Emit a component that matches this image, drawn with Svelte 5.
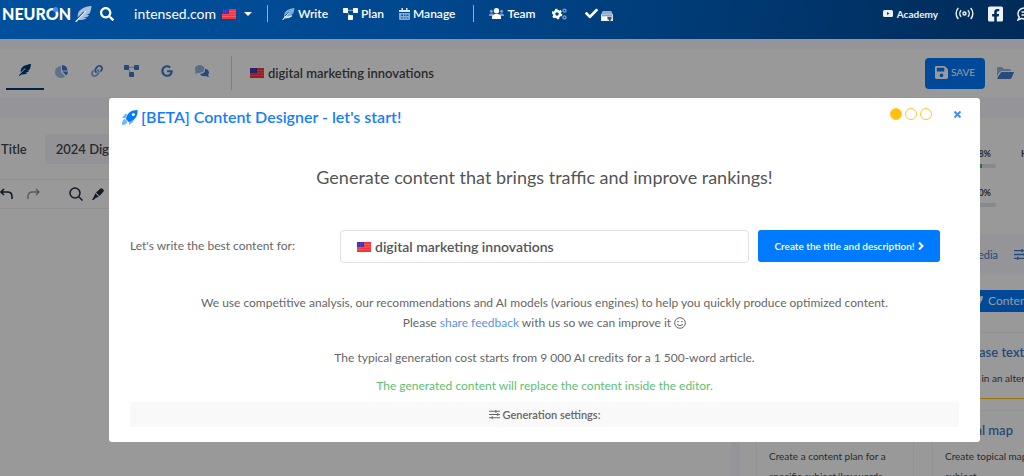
<script>
  const feather = 'M512 0C460.22 3.56 96.44 38.2 71.01 287.61c-3.09 26.66-4.84 53.44-5.99 80.24l178.87-178.69c6.25-6.25 16.4-6.25 22.65 0s6.25 16.38 0 22.63L7.04 471.03c-9.38 9.37-9.38 24.57 0 33.94 9.38 9.37 24.59 9.37 33.98 0l57.13-57.07c42.09-.14 84.15-2.53 125.96-7.36 53.48-5.44 97.02-26.47 132.58-56.54H255.74l146.79-48.88c11.25-14.89 21.37-30.71 30.45-47.12h-81.14l106.54-53.21C500.29 132.86 510.19 26.26 512 0z';
  const search = 'M505 442.7L405.3 343c-4.5-4.5-10.6-7-17-7H372c27.6-35.3 44-79.7 44-128C416 93.1 322.9 0 208 0S0 93.1 0 208s93.1 208 208 208c48.3 0 92.7-16.4 128-44v16.3c0 6.4 2.5 12.5 7 17l99.7 99.7c9.4 9.4 24.6 9.4 33.9 0l28.3-28.3c9.4-9.4 9.4-24.6.1-34zM208 336c-70.7 0-128-57.2-128-128 0-70.7 57.2-128 128-128 70.7 0 128 57.2 128 128 0 70.7-57.2 128-128 128z';
  const check = 'M173.898 439.404l-166.4-166.4c-9.997-9.997-9.997-26.206 0-36.204l36.203-36.204c9.997-9.998 26.207-9.998 36.204 0L192 312.69 432.095 72.596c9.997-9.997 26.207-9.997 36.204 0l36.203 36.204c9.997 9.997 9.997 26.206 0 36.204l-294.4 294.401c-9.998 9.997-26.207 9.997-36.204-.001z';
  const linkA = 'M326.612 185.391c59.747 59.809 58.927 155.698.36 214.59-.11.12-.24.25-.36.37l-67.2 67.2c-59.27 59.27-155.699 59.262-214.96 0-59.27-59.26-59.27-155.7 0-214.96l37.106-37.106c9.84-9.84 26.786-3.3 27.294 10.606.648 17.722 3.826 35.527 9.69 52.721 1.986 5.822.567 12.262-3.783 16.612l-13.087 13.087c-28.026 28.026-28.905 73.66-1.155 101.96 28.024 28.579 74.086 28.749 102.325.51l67.2-67.19c28.191-28.191 28.073-73.757 0-101.83-3.701-3.694-7.429-6.564-10.341-8.569a16.037 16.037 0 0 1-6.947-12.606c-.396-10.567 3.348-21.456 11.698-29.806l21.054-21.055c5.521-5.521 14.182-6.199 20.584-1.731a152.482 152.482 0 0 1 20.522 17.197z';
  const linkB = 'M467.547 44.449c-59.261-59.262-155.69-59.27-214.96 0l-67.2 67.2c-.12.12-.25.25-.36.37-58.566 58.892-59.387 154.781.36 214.59a152.454 152.454 0 0 0 20.521 17.196c6.402 4.468 15.064 3.789 20.584-1.731l21.054-21.055c8.35-8.35 12.094-19.239 11.698-29.806a16.037 16.037 0 0 0-6.947-12.606c-2.912-2.005-6.64-4.875-10.341-8.569-28.073-28.073-28.191-73.639 0-101.83l67.2-67.19c28.239-28.239 74.3-28.069 102.325.51 27.75 28.3 26.872 73.934-1.155 101.96l-13.087 13.087c-4.35 4.35-5.769 10.79-3.783 16.612 5.864 17.194 9.042 34.999 9.69 52.721.509 13.906 17.454 20.446 27.294 10.606l37.106-37.106c59.271-59.259 59.271-155.699.001-214.959z';
  const google = 'M488 261.8C488 403.3 391.1 504 248 504 110.8 504 0 393.2 0 256S110.8 8 248 8c66.8 0 123 24.5 166.3 64.9l-67.5 64.9C258.5 52.6 94.3 116.6 94.3 256c0 86.5 69.1 156.6 153.7 156.6 98.2 0 135-70.4 140.8-106.9H248v-85.3h236.1c2.3 12.7 3.9 24.9 3.9 41.4z';
  const save = 'M433.941 129.941l-83.882-83.882A48 48 0 0 0 316.118 32H48C21.49 32 0 53.49 0 80v352c0 26.51 21.49 48 48 48h352c26.51 0 48-21.49 48-48V163.882a48 48 0 0 0-14.059-33.941zM224 416c-35.346 0-64-28.654-64-64 0-35.346 28.654-64 64-64s64 28.654 64 64c0 35.346-28.654 64-64 64zm96-304.52V212c0 6.627-5.373 12-12 12H76c-6.627 0-12-5.373-12-12V108c0-6.627 5.373-12 12-12h228.52c3.183 0 6.235 1.264 8.485 3.515l3.48 3.48A11.996 11.996 0 0 1 320 111.48z';
  const facebook = 'M400 32H48A48 48 0 0 0 0 80v352a48 48 0 0 0 48 48h137.25V327.69h-63V256h63v-54.64c0-62.15 37-96.48 93.67-96.48 27.14 0 55.52 4.84 55.52 4.84v61h-31.27c-30.81 0-40.42 19.12-40.42 38.73V256h68.78l-11 71.69h-57.78V480H400a48 48 0 0 0 48-48V80a48 48 0 0 0-48-48z';
  let keyword = 'digital marketing innovations';
  let title = '2024 Digital Marketing Innovations';
</script>

{#snippet flag()}
  <svg class="flag" width="14" height="10" viewBox="0 0 14 10" aria-hidden="true">
    <rect width="14" height="10" fill="#ff3038" />
    <path d="M0 2.5h14M0 5h14M0 7.5h14" stroke="#ff686c" stroke-width=".8" />
    <rect width="7" height="5" fill="#3a2bb0" />
    <path d="M1 1.2h5M1.5 2.6h4M1 4h5" stroke="#8c86e0" stroke-width=".5" stroke-dasharray="1 1" />
  </svg>
{/snippet}

{#snippet diagram()}
  <svg width="15" height="12" viewBox="0 0 15 12" fill="currentColor" aria-hidden="true">
    <path d="M4 2.4h7M4 4l3 4" stroke="currentColor" opacity=".55" />
    <rect width="5" height="5" rx=".7" /><rect x="10" width="5" height="5" rx=".7" /><rect x="5" y="7" width="5" height="5" rx=".7" />
  </svg>
{/snippet}

{#snippet sliders(w)}
  <svg width={w} height={w} viewBox="0 0 12 12" fill="none" stroke="currentColor" stroke-width="1.2" aria-hidden="true">
    <path d="M0 2.5h12M0 6h12M0 9.5h12M7.5 1v3M9.5 4.5v3M3.5 8v3" />
  </svg>
{/snippet}

<header class="top">
  <a class="logo" href="#home"><span>NEUR<span class="ring">O</span>N</span>
    <svg width="17" height="16" viewBox="0 0 512 512" aria-hidden="true"><path d={feather} fill="#a8c0df" /><path d="M8 504L330 170" stroke="#fff" stroke-width="30" /></svg>
  </a>
  <button class="plain find" aria-label="Search"><svg width="14" height="14" viewBox="0 0 512 512" fill="currentColor"><path d={search} /></svg></button>
  <button class="plain site">intensed.com {@render flag()}<svg class="caret" width="8" height="4" viewBox="0 0 8 4"><path d="M0 0h8L4 4z" fill="#fff" /></svg></button>
  <nav>
    <a class="write" href="#write"><svg width="13" height="12" viewBox="0 0 512 512" aria-hidden="true"><path d={feather} fill="#82aad5" /><path d="M8 504L270 210M65 380Q300 420 400 340L255 384L100 390z" stroke="#fff" fill="#fff" stroke-width="30" /></svg>Write</a>
    <a class="plan" href="#plan">{@render diagram()}Plan</a>
    <a class="manage" href="#manage"><svg width="11" height="12" viewBox="0 0 11 12" aria-hidden="true"><path d="M0 2h11v2H0zM2.5 0h1.5v3H2.5zM7 0h1.5v3H7z" fill="#dce8f5" /><path d="M0 5h11v6a1 1 0 0 1-1 1H1a1 1 0 0 1-1-1z" fill="#86abd3" /><path d="M2 6.5h2v1.5H2zM5 6.5h1.5v1.5H5zM7.5 6.5h2v1.5h-2zM2 9.5h2v1H2zM5 9.5h1.5v1H5zM7.5 9.5h2v1h-2z" fill="#1f5da0" /></svg>Manage</a>
    <a class="team" href="#team"><svg width="15" height="11" viewBox="0 0 15 11" fill="currentColor" aria-hidden="true"><g opacity=".5"><circle cx="2.4" cy="3.2" r="1.5" /><circle cx="12.6" cy="3.2" r="1.5" /><path d="M0 7.5a2 2 0 0 1 2-2h2v2.5H0zM15 7.5a2 2 0 0 0-2-2h-2v2.5h4z" /></g><circle cx="7.5" cy="2.7" r="2.7" /><path d="M3 9.5a3.5 3.5 0 0 1 3.5-3.5h2a3.5 3.5 0 0 1 3.5 3.5V11H3z" /></svg>Team</a>
    <a class="cogs" href="#settings" aria-label="Settings"><svg width="15" height="12" viewBox="0 0 15 12" aria-hidden="true"><circle cx="5" cy="6" r="3" fill="none" stroke="#fff" stroke-width="2.5" /><circle cx="5" cy="6" r="4.5" fill="none" stroke="#fff" stroke-width="1.6" stroke-dasharray="2.3 2.41" /><g fill="none" stroke="#739dca"><circle cx="12.5" cy="2.6" r="1.5" stroke-width="1.4" /><circle cx="12.5" cy="9.4" r="1.5" stroke-width="1.4" /></g></svg></a>
    <a class="done" href="#tasks" aria-label="Tasks"><svg width="13" height="13" viewBox="0 0 512 512" fill="currentColor" aria-hidden="true"><path d={check} /></svg><svg class="shop" width="12" height="12" viewBox="0 0 12 12" aria-hidden="true"><path d="M2 1h8l2 4v6H0V5z" fill="#dce3e9" /><path d="M2 1h8l1.5 3H.5z" fill="#a3abb2" /><path d="M1 4.500h10v2H1z" fill="#65a7f4" /><path d="M1 6.500h5v4H1z" fill="#fff" /><path d="M6.500 7h4v2l-1 1v2H8v-2L6.500 9z" fill="#50504b" /></svg></a>
  </nav>
  <div class="right">
    <a class="academy" href="#academy"><svg width="10" height="7" viewBox="0 0 10 7"><rect width="10" height="7" rx="1.5" fill="#ebf0f7" /><path d="M4 2v3l2.5-1.5z" fill="#003a75" /></svg>Academy</a>
    <a href="#live" aria-label="Live"><svg width="19" height="13" viewBox="0 0 20 13" fill="none" stroke="currentColor" stroke-width="1.5"><circle cx="10" cy="6.5" r="1.6" /><path d="M6.500 3a5 5 0 0 0 0 7M13.500 3a5 5 0 0 1 0 7M3.500.7a8.500 8.500 0 0 0 0 11.600M16.500.7a8.500 8.500 0 0 1 0 11.600" /></svg></a>
    <a href="#facebook" aria-label="Facebook"><svg width="15" height="16" viewBox="0 26 448 460" fill="currentColor"><path d={facebook} /></svg></a>
    <a href="#chat" aria-label="Chat"><svg width="15" height="14" viewBox="0 0 15 14" fill="none" stroke="currentColor" stroke-width="1.5"><path d="M1 13l1.200-3A5.300 5.300 0 0 1 1 6.500C1 3.500 4 1 7.500 1S14 3.500 14 6.500 11 12 7.500 12c-1 0-2-.2-3-.6zM4.500 5h6M4.500 8h4" /></svg></a>
  </div>
</header>

<main class="page">
  <div class="tools">
    <div class="tabs">
      <button class="plain active" aria-label="Editor"><svg width="12" height="12" viewBox="0 0 512 512" fill="#003b7f"><path d={feather} /></svg></button>
      <button class="plain" aria-label="Statistics"><svg width="13" height="13" viewBox="0 0 13 13"><path d="M6 1v6l4 4.500A6 6 0 1 1 6 1z" fill="#9fbfe8" /><path d="M7 0a6 6 0 0 1 5.500 5.500H7zM7.500 6.500H13a6 6 0 0 1-1.800 4z" fill="#3d7bd5" /></svg></button>
      <button class="plain" aria-label="Links"><svg width="12" height="12" viewBox="0 0 512 512"><path d={linkA} fill="#86aee5" /><path d={linkB} fill="#477fd0" /></svg></button>
      <button class="plain" aria-label="Structure">{@render diagram()}</button>
      <button class="plain" aria-label="Search results"><svg width="12" height="12" viewBox="0 0 488 512" fill="currentColor"><path d={google} /></svg></button>
      <button class="plain" aria-label="Comments"><svg width="14" height="12" viewBox="0 0 14 12"><path d="M10 3.800c2.500.4 4 1.900 4 3.700 0 .9-.4 1.700-1 2.300L14 12c-1.300 0-2.300-.4-3-.9-2.500.5-5-.2-6-2.100C8.500 9 10.500 7 10 3.800z" fill="#3f7bd0" /><ellipse cx="4.7" cy="4" rx="4.7" ry="3.9" fill="#92b5e5" /><path d="M1 5l-1 4 4-1.500z" fill="#92b5e5" /></svg></button>
    </div>
    <div class="query">{@render flag()}<span>digital marketing innovations</span></div>
    <button class="save"><svg width="13" height="15" viewBox="0 24 448 464" fill="currentColor" aria-hidden="true"><path d={save} /></svg>SAVE</button>
    <button class="plain folder" aria-label="Open"><svg width="17" height="12" viewBox="0 0 17 12"><path d="M0 9.500V1.500A1.500 1.500 0 0 1 1.500 0H5l2 2h5.500A1.500 1.500 0 0 1 14 3.500V4H5a3 3 0 0 0-2.600 1.500z" fill="#96b5dc" /><path d="M5 5h11.500q.7.100.4.8L14.500 11q-.5 1-1.500 1H.8q-.8-.1-.4-.9L3.500 6Q4 5 5 5z" fill="#447dd0" /></svg></button>
  </div>

  <div class="columns">
    <section class="editor">
      <div class="title-row"><label for="title">Title</label><input id="title" bind:value={title} /></div>
      <div class="format">
        <button class="plain" aria-label="Undo"><svg width="13" height="13" viewBox="0 0 13 13" fill="none" stroke="currentColor" stroke-width="1.6"><path d="M4 1L1 4l3 3M1 4h6.500q4.500 0 4.500 4.500V11" /></svg></button>
        <button class="plain redo" aria-label="Redo"><svg width="13" height="13" viewBox="0 0 13 13" fill="none" stroke="currentColor" stroke-width="1.4"><path d="M9 1l3 3-3 3M12 4H5.500Q1 4 1 8.500V11" /></svg></button>
        <button class="plain lens" aria-label="Find"><svg width="14" height="14" viewBox="0 0 14 14" fill="none" stroke="currentColor" stroke-width="1.5"><circle cx="6" cy="6" r="5" /><path d="M9.800 9.800L13.500 13.500" /></svg></button>
        <button class="plain" aria-label="Highlight"><svg width="12" height="12" viewBox="0 0 12 12" fill="currentColor"><path d="M4 4.500L8.500.5q1-.8 2 .2l.8.8q1 1 .2 2L7.500 8zM3.300 5.200l3.500 3.500L5 9.500 4 9.800 1.500 12H0l2.200-4z" /></svg></button>
      </div>
    </section>
    <aside>
      <div class="scores">
        <div class="score"><span>58%</span><i><b></b></i></div><div class="score next"><span>H1</span></div>
        <div class="score"><span>0%</span><i></i></div>
      </div>
      <div class="asidetabs"><button class="plain">Media</button><button class="plain" aria-label="Options">{@render sliders(13)}</button></div>
      <div class="panel">
        <button class="content"><svg width="11" height="11" viewBox="0 0 512 512" fill="currentColor" aria-hidden="true"><path d={feather} /></svg>Content</button>
        <div class="cards">
          <article><h3>Write</h3><p>Write the next part</p></article>
          <article><h3>Rephrase text</h3><p>Rewrite in an alternative way</p></article>
          <article><h3>Content plan</h3><p>Create a content plan for a specific subject/keywords</p></article>
          <article><h3>Topical map</h3><p>Create topical map for a subject</p></article>
        </div>
      </div>
    </aside>
  </div>
</main>

<div class="backdrop">
  <div class="modal" role="dialog" aria-labelledby="dlg">
    <div class="head">
      <svg width="16" height="15" viewBox="0 0 16 15" aria-hidden="true"><path d="M5 4H3L0 8h4zM12 9l-1 3-4 3v-4zM3 9c-2 0-3 2-3 6 3 0 5-1 5.500-3.500z" fill="#73b5ff" /><path d="M4 9C5 3 9 0 15.500 0 16 6 13 10.500 6.500 12z" fill="#007bff" /><circle cx="11.3" cy="4.4" r="1.5" fill="#fff" /></svg>
      <h2 id="dlg">[BETA] Content Designer - let's start!</h2>
      <div class="steps" aria-label="Step 1 of 3"><i class="on"></i><i></i><i></i></div>
      <button class="plain close" aria-label="Close"><svg width="7" height="7" viewBox="0 0 7 7" stroke="currentColor" stroke-width="2"><path d="M.5.5l6 6M6.500.5l-6 6" /></svg></button>
    </div>
    <p class="lead">Generate content that brings traffic and improve rankings!</p>
    <div class="form">
      <label for="kw">Let's write the best content for:</label>
      <div class="field">{@render flag()}<input id="kw" bind:value={keyword} /></div>
      <button class="create">Create the title and description! <svg width="6" height="8" viewBox="0 0 6 8" fill="none" stroke="currentColor" stroke-width="2" aria-hidden="true"><path d="M1 .5L4.500 4 1 7.500" /></svg></button>
    </div>
    <p class="text about">We use competitive analysis, our recommendations and AI models (various engines) to help you quickly produce optimized content.<br />Please <a href="#feedback">share feedback</a> with us so we can improve it <svg class="smile" width="12" height="12" viewBox="0 0 12 12" fill="none" stroke="currentColor" aria-label="smile"><circle cx="6" cy="6" r="5.3" /><path d="M3 7.300q3 3 6 0M3.200 4.800q.8-.9 1.600 0M7.200 4.800q.8-.9 1.600 0" /></svg></p>
    <p class="text cost">The typical generation cost starts from 9 000 AI credits for a 1 500-word article.</p>
    <p class="text note">The generated content will replace the content inside the editor.</p>
    <button class="settings">{@render sliders(11)} Generation settings:</button>
  </div>
</div>

<style>
  :global(body) { margin: 0; background: #f8f9ff; overflow: hidden; }
  :global(#app) { font: 13px/20px Lato, "Open Sans", sans-serif; color: #44474c; }
  :global(#app *) { box-sizing: border-box; }
  svg { display: block; flex: none; }
  a { text-decoration: none; color: inherit; }
  button, input { font: inherit; color: inherit; }
  h2, h3, p { margin: 0; }
  .plain { display: flex; align-items: center; border: 0; padding: 0; background: none; }

  .top { position: relative; z-index: 3; display: flex; align-items: center; height: 39px; padding: 0 0 12px 2px; overflow: hidden; color: #fff; background: linear-gradient(100deg, #00509d, #00488f 40%, #002b58); }
  .logo { display: flex; align-items: center; gap: 4px; font: 900 16px/20px Lato, sans-serif; }
  .ring { position: relative; }
  .ring::after { content: ''; position: absolute; top: 3px; right: 1px; width: 5px; height: 5px; border-radius: 50%; background: #3490ff; }
  .find { margin-left: 8px; }
  .site { gap: 6px; margin-left: 20px; font-size: 14px; }
  .caret { margin-left: 2px; }
  nav { display: flex; align-items: center; margin-left: 15px; padding-left: 14px; border-left: 1px solid #8aaed4; height: 17px; font-weight: 600; font-size: 12px; }
  nav a { display: flex; align-items: center; gap: 3px; }
  .plan, .manage { margin-left: 15px; }
  .team { margin-left: 18px; padding-left: 15px; height: 17px; border-left: 1px solid #8aaed4; }
  .cogs { margin-left: 16px; }
  .done { margin-left: 18px; }
  .shop { position: relative; top: 2px; }
  .right { display: flex; align-items: center; gap: 14px; margin: 0 -8px 0 auto; color: #edf2f8; }
  .academy { display: flex; align-items: center; gap: 4px; margin-right: 3px; font-size: 10px; font-weight: 700; }

  .page { padding-top: 10px; }
  .tools { display: flex; align-items: center; min-height: 48px; background: #fff; color: #4079cc; }
  .tabs { display: flex; align-self: stretch; padding-left: 6px; }
  .tabs button { justify-content: center; width: 35px; height: 41px; padding-top: 3px; }
  .tabs .active { width: 38px; border-bottom: 2px solid #003b7f; }
  .query { display: flex; align-items: center; gap: 4px; margin-left: 12px; padding-left: 18px; height: 34px; border-left: 1px solid #cfd1d6; color: #44474c; font-weight: 600; }
  .save { display: flex; align-items: center; gap: 3px; height: 31px; margin-left: auto; padding: 0 10px 2px; border: 0; border-radius: 4px; background: #007bff; color: #fff; font-size: 10px; }
  .folder { margin: 0 10px 0 12px; }
  .columns { display: flex; gap: 9px; margin-top: 21px; }
  .editor { flex: 1; min-width: 0; min-height: 380px; background: #fff; }
  .title-row { display: flex; align-items: center; gap: 18px; height: 62px; padding-left: 1px; font-weight: 600; border-bottom: 1px solid #eceef3; }
  .title-row input { flex: 1; min-width: 0; height: 30px; padding: 0 11px; border: 0; border-radius: 4px; background: #f5f6fc; }
  .format { display: flex; align-items: center; gap: 9px; height: 29px; color: #202d3d; border-bottom: 1px solid #eceef3; }
  .redo { margin-left: 5px; opacity: .5; }
  .lens { margin-left: 20px; }
  aside { flex: 0 0 284px; min-width: 0; overflow: hidden; background: #fff; }
  .scores { display: grid; grid-template-columns: 256px 60px; row-gap: 11px; height: 116px; padding-top: 26px; align-content: start; }
  .score { padding-left: 200px; height: 28px; font-size: 9px; font-weight: 700; }
  .score span { display: block; width: 51px; text-align: right; }
  .score i { display: block; height: 4px; border-radius: 2px; background: #e2e5e9; }
  .score b { display: block; width: 75%; height: 4px; background: #35c25a; }
  .score.next { padding-left: 25px; }
  .score.next span { text-align: left; }
  .asidetabs { display: flex; align-items: center; justify-content: flex-end; gap: 16px; height: 41px; margin-right: -3px; background: #f8f9ff; color: #4079cc; font-size: 11px; }
  .panel { padding: 15px 0 0 16px; }
  .content { display: flex; align-items: center; gap: 5px; height: 22px; width: 330px; padding-left: 216px; border: 0; background: #007bff; color: #fff; font-size: 12px; }
  .cards { display: grid; grid-template-columns: 158px 158px; gap: 0 18px; padding-top: 20px; }
  article { padding: 9px 12px 10px; border: 1px solid #f3f4f7; border-bottom-color: #ffc107; min-height: 67px; }
  h3 { font-size: 13px; line-height: 20px; font-weight: 600; color: #4079cc; }
  article p { margin-top: 6px; font-size: 10px; line-height: 20px; white-space: nowrap; }
  article:nth-child(n + 3) { margin-top: 11px; }
  article:nth-child(n + 3) p { white-space: normal; }

  .backdrop { position: fixed; inset: 39px 0 0; z-index: 2; padding: 59px 44px 0 109px; background: rgba(0, 0, 0, .4); }
  .modal { padding: 9px 21px 15px; border-radius: 3px; background: #fff; color: #666; text-align: center; }
  .head { display: flex; align-items: center; height: 20px; }
  .head > svg { margin: 0 3px 0 -8px; }
  h2 { font-size: 16px; line-height: 20px; font-weight: 600; color: #177dff; }
  .steps { display: flex; gap: 3px; margin-left: auto; padding-bottom: 6px; }
  .steps i { width: 12px; height: 12px; border: 1px solid #ffc738; border-radius: 50%; }
  .steps .on { background: #ffc107; }
  .close { margin: 0 -2px 6px 22px; color: #4a8eea; }
  .lead { margin-top: 38px; font-size: 18px; line-height: 24px; color: #555; }
  .form { display: grid; grid-template-columns: 201px 1fr 182px; column-gap: 9px; align-items: start; margin: 41px 19px 0 0; text-align: left; }
  .form label { line-height: 32px; font-size: 12px; }
  .field { display: flex; align-items: center; gap: 4px; height: 33px; padding-left: 16px; border: 1px solid #dce0ea; border-radius: 4px; }
  .field input { flex: 1; min-width: 0; height: 30px; padding: 0; border: 0; outline: 0; background: none; font-size: 14px; font-weight: 600; color: #555; }
  .create { display: flex; align-items: center; justify-content: center; gap: 3px; height: 32px; padding: 0; border: 0; border-radius: 3px; background: #007bff; color: #fff; font-size: 10px; font-weight: 600; white-space: nowrap; }
  .text { font-size: 12px; line-height: 20px; }
  .about { margin-top: 30px; }
  .about a { color: #5a93e8; }
  .smile { display: inline-block; vertical-align: -2px; }
  .cost { margin-top: 15px; }
  .note { margin-top: 8px; color: #5dc071; }
  .settings { display: flex; align-items: center; justify-content: center; gap: 3px; width: 100%; height: 25px; margin-top: 6px; padding: 0; border: 0; background: #f9f9f9; font-size: 11px; font-weight: 600; }
</style>
